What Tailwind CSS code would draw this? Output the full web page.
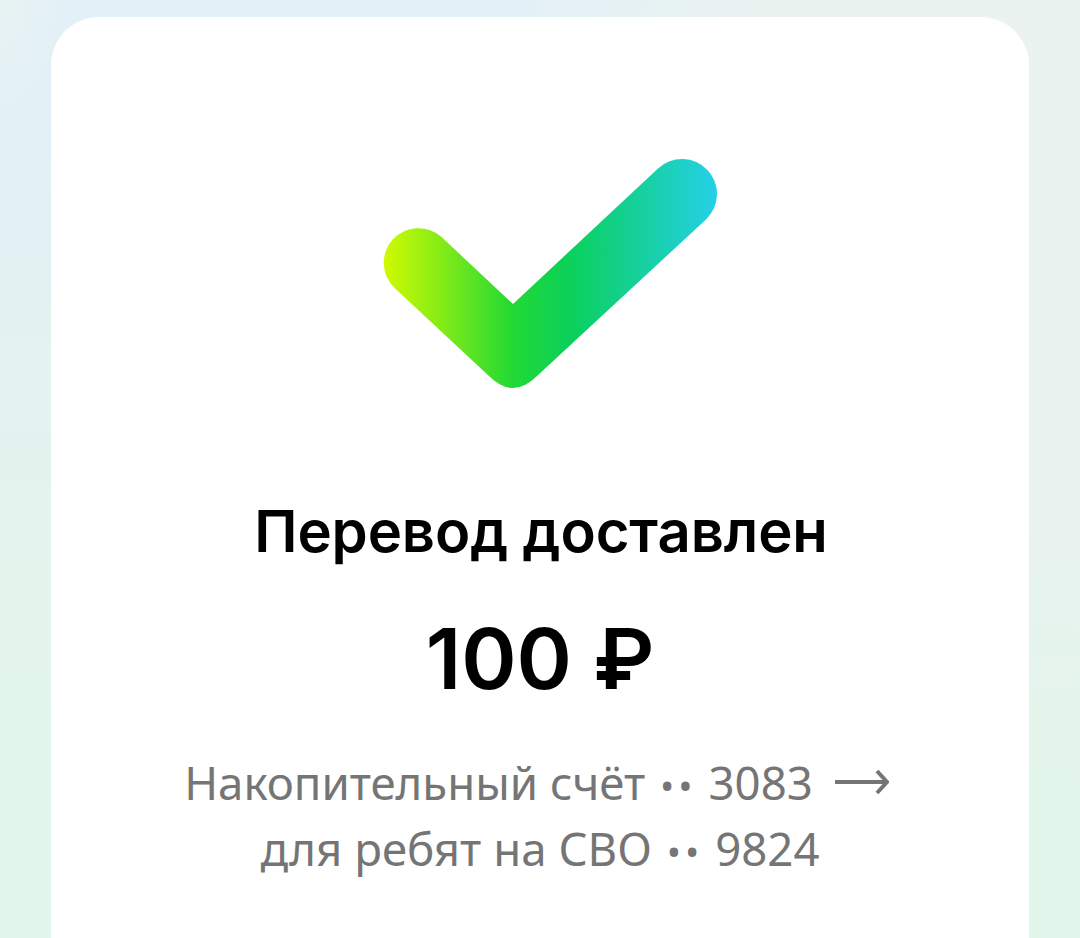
<!DOCTYPE html>
<html lang="ru">
<head>
    <meta charset="UTF-8">
    <title>Перевод доставлен</title>
    <script src="https://cdn.jsdelivr.net/npm/@tailwindcss/browser@4"></script>
</head>
<body class="h-[938px] w-[1080px] overflow-hidden bg-[radial-gradient(ellipse_70px_130px_at_0_0,#e8f3f2,transparent),radial-gradient(ellipse_55%_75%_at_100%_10%,#eaf3f0_55%,transparent),linear-gradient(to_bottom,#e2f0f8,#e2f5ea_75%)] font-['Inter','Noto_Sans',sans-serif]">
    <div class="pt-[17px] px-[51px]">
        <div class="h-[921px] bg-white rounded-t-[48px] flex flex-col items-center">
            <svg class="mt-[139px] ml-[20px] block" width="340" height="235" viewBox="380 156 340 235">
                <defs>
                    <linearGradient id="check" x1="383" y1="0" x2="716" y2="0" gradientUnits="userSpaceOnUse">
                        <stop offset="0" stop-color="#d2fa00"/>
                        <stop offset="0.39" stop-color="#22d934"/>
                        <stop offset="0.56" stop-color="#0ad05a"/>
                        <stop offset="1" stop-color="#24d0e8"/>
                    </linearGradient>
                </defs>
                <path fill="url(#check)" d="M441 236.5 L513 304 L658 168.5 A34.7 34.7 0 0 1 706 219.5 L537 376 Q513 400 489 376 L394 287.5 A34.7 34.7 0 0 1 441 236.5 Z"/>
            </svg>
            <h1 class="mt-[105px] ml-[2px] text-[58px] leading-[70px] font-semibold tracking-[-0.1px] text-black">Перевод доставлен</h1>
            <div class="mt-[45px] text-[84px] leading-[96px] font-semibold text-black">100 ₽</div>
            <div class="mt-[42px] mr-[7px] flex items-center gap-[22px] font-['Noto_Sans',sans-serif] text-[45.6px] leading-[66px] text-[#757575]">
                <span>Накопительный счёт <span class="ml-[3px] text-[38px] leading-none tracking-[4px]">••</span> 3083</span>
                <svg width="54" height="26" viewBox="0 0 54 26" fill="none" stroke="#757575" stroke-width="4">
                    <path d="M0 13 H52 M42 2 L52 13 L42 24"/>
                </svg>
            </div>
            <div class="font-['Noto_Sans',sans-serif] text-[45.6px] leading-[66px] text-[#757575]">для ребят на СВО <span class="ml-[3px] text-[38px] leading-none tracking-[4px]">••</span> 9824</div>
        </div>
    </div>
</body>
</html>
